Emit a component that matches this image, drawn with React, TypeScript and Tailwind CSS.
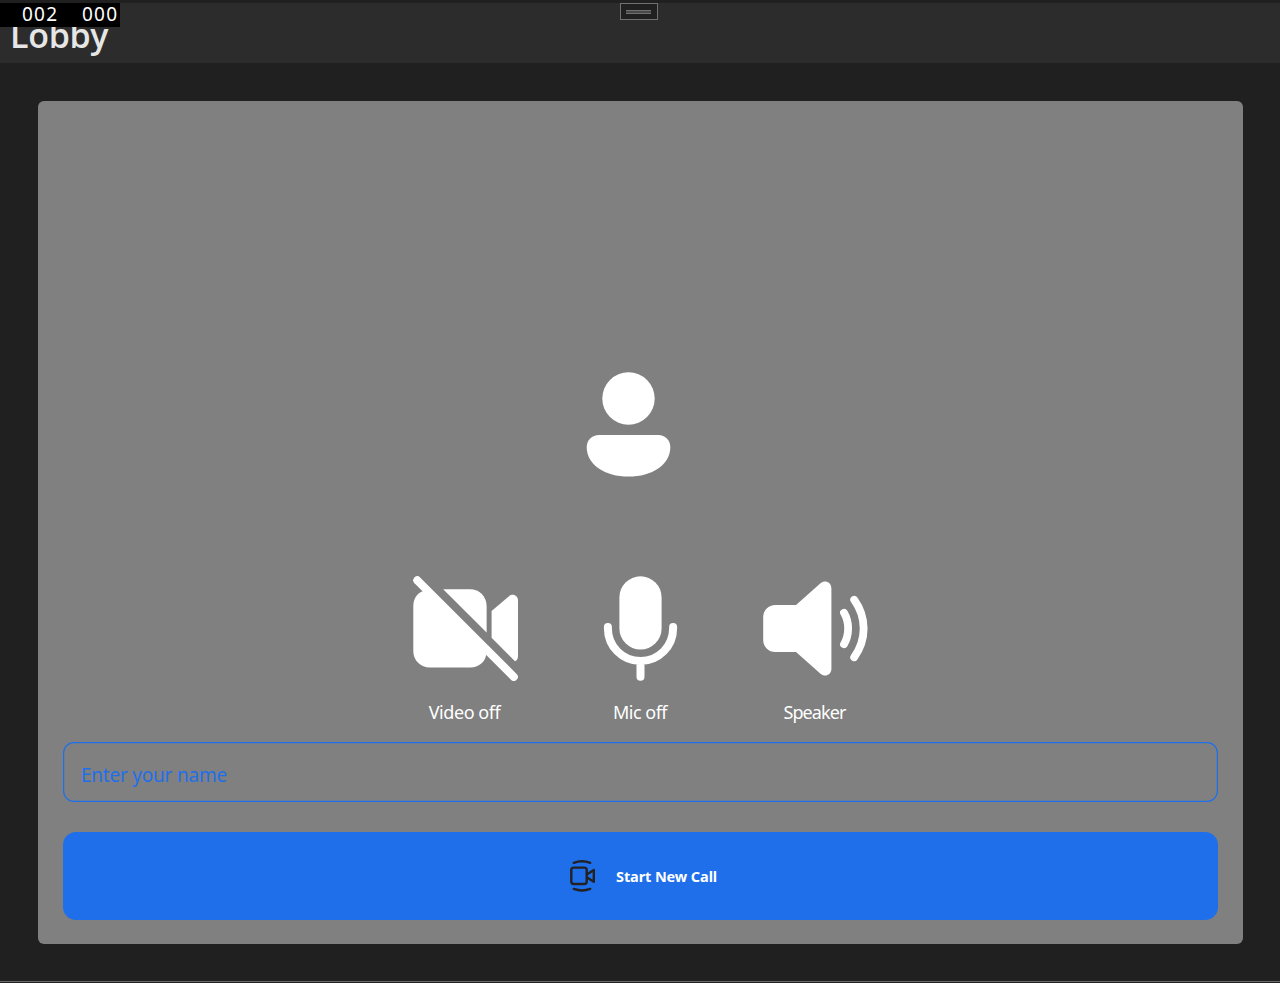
import type { ReactNode } from "react";

function Control({ label, className, children }: { label: string; className: string; children: ReactNode }) {
  return (
    <button className="flex w-[105px] flex-col items-center">
      {children}
      <span className={`mt-[18px] whitespace-nowrap text-[18px] leading-[26px] text-white ${className}`}>{label}</span>
    </button>
  );
}

export default function App() {
  return (
    <div className="relative flex h-[983px] w-[1280px] flex-col overflow-hidden bg-[#202020] pt-[3px] font-['Noto_Sans','Open_Sans',sans-serif]">
      <header className="h-[60px] shrink-0 bg-[#2c2c2c] pl-[10px] pt-[8px]">
        <h1 className="font-['Open_Sans','Noto_Sans',sans-serif] text-[34px] font-semibold leading-[48px] tracking-[-0.3px] text-[#e6e6e6]">Lobby</h1>
      </header>
      <div className="absolute left-0 top-[3px] flex h-6 w-[120px] bg-black pl-[22px] text-[19px] leading-[23px] tracking-[1.2px] text-white">
        <span className="w-[60px]">002</span>
        <span>000</span>
      </div>
      <div className="absolute left-[620px] top-[3px] flex h-[17px] w-[38px] items-start border border-[#717171] bg-[#202020] pl-[5px] pt-[6px]">
        <div className="h-1 w-[25px] border-y border-[#717171] bg-[#484848]" />
      </div>

      <main className="ml-[38px] mr-[37px] mt-[38px] flex h-[843px] shrink-0 flex-col rounded-[6px] bg-[#808080] px-[25px]">
        <svg className="ml-[513px] mt-[271px] h-[105px] w-[105px] shrink-0" viewBox="576 372 105 105" fill="white">
          <circle cx="628.5" cy="398.5" r="26.2" />
          <path d="M599 434.9H658.5C665 434.9 670.3 440.2 670.3 447C670.3 465 652 476.6 628.5 476.6C605 476.6 586.7 465 586.7 447C586.7 440.2 592 434.9 599 434.9Z" />
        </svg>

        <div className="ml-[350px] mt-[99px] flex h-[166px] shrink-0 gap-[70px]">
          <Control label="Video off" className="mr-[2px] tracking-[-0.45px]">
            <svg className="h-[105px] w-[105px]" viewBox="413 576 105 105" fill="white">
              <path d="M422.5 591.3L428 591.3L486.5 649.5L486.2 654.5C485.3 662 478.5 667.5 470.5 667.5H430C420.5 667.5 413.3 660.5 413.3 651V606C413.3 599 417 593.5 422.5 591.3Z" />
              <path d="M443.2 589.2H470C479.5 589.2 486.6 596.5 486.6 606V632.6Z" />
              <path d="M491.6 611.1L509 596.2C512.8 593 518 595.5 518 600.5V656C518 658.5 517 660.5 515 661.3L491.6 637.8Z" />
              <path d="M417.3 580.3L513.8 676.8" stroke="white" strokeWidth="8" strokeLinecap="round" />
            </svg>
          </Control>
          <Control label="Mic off" className="mr-[1px] tracking-[-0.5px]">
            <svg className="h-[105px] w-[105px]" viewBox="588 576 105 105" fill="none" stroke="white" strokeWidth="8" strokeLinecap="round">
              <rect x="619.4" y="576.3" width="42.2" height="73.2" rx="21.1" fill="white" stroke="none" />
              <path d="M607.9 627V628.5A32.6 32.6 0 0 0 673.1 628.5V627M640.5 661.5V676.8" />
            </svg>
          </Control>
          <Control label="Speaker" className="mr-[2px] tracking-[-0.9px]">
            <svg className="h-[105px] w-[105px]" viewBox="763 576 105 105" fill="none" stroke="white" strokeWidth="7.8" strokeLinecap="round">
              <path d="M775.5 604.9H796L820.5 583.3C825 579.5 831.4 582.4 831.4 588.5V668.8C831.4 675 825 677.6 820.5 673.8L796 652.1H775.5C768.5 652.1 763.2 646.8 763.2 640V617C763.2 610.2 768.5 604.9 775.5 604.9Z" fill="white" stroke="none" />
              <path d="M844 612.8C849.5 622 849.5 635 844 644.2M854.2 599.8C866.8 617.5 866.8 639.5 854.2 657.2" />
            </svg>
          </Control>
        </div>

        <input
          placeholder="Enter your name"
          className="h-[60px] w-full shrink-0 rounded-[11px] bg-transparent px-[18px] pt-[6px] text-[19px] tracking-[-0.22px] text-[#1f6feb] shadow-[inset_0_0_0_1.25px_#1f6feb] outline-none placeholder:text-[#1f6feb] placeholder:opacity-100"
        />
        <button className="mt-[30px] flex h-[88px] shrink-0 items-center rounded-[13px] bg-[#1f6feb] pl-[506px]">
          <svg className="h-[34px] w-[28px]" viewBox="569 859 28 34" fill="none" stroke="#222222" strokeWidth="2.4" strokeLinecap="round" strokeLinejoin="round">
            <rect x="571.3" y="867.6" width="15.4" height="16.4" rx="2.4" />
            <path d="M587.2 874.2L593.8 870V881.8L587.2 877.6M573.8 862.8Q582 859.8 590.2 862.8M573.8 888.9Q582 892 590.2 888.9" />
          </svg>
          <span className="ml-[19px] whitespace-nowrap text-[14.5px] font-bold leading-5 tracking-[-0.1px] text-white">Start New Call</span>
        </button>
      </main>
      <div className="mt-[37px] h-px shrink-0 bg-[#6b686b]" />
    </div>
  );
}
